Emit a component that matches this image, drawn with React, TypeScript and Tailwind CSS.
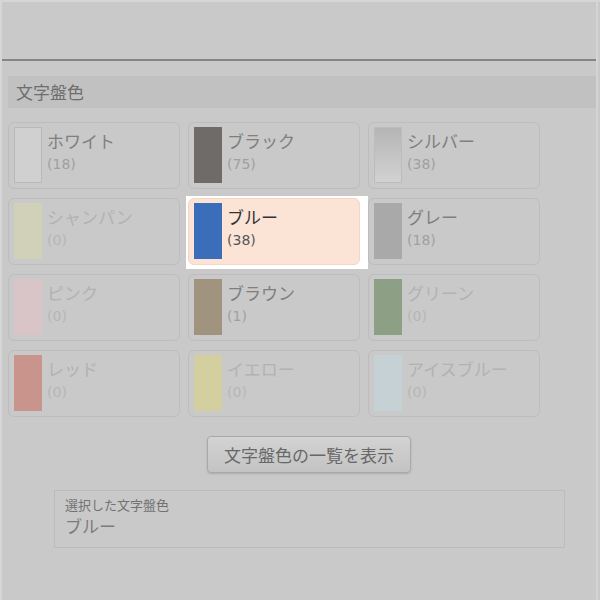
type Dial = {
  name: string
  count: number
  swatch: string
}

const dials: Dial[] = [
  { name: 'ホワイト', count: 18, swatch: 'bg-[#d0d0d0] border border-[#b9b9b9]' },
  { name: 'ブラック', count: 75, swatch: 'bg-[#6f6b69]' },
  { name: 'シルバー', count: 38, swatch: 'bg-gradient-to-b from-[#b5b5b5] to-[#d2d2d2] border border-[#bcbcbc]' },
  { name: 'シャンパン', count: 0, swatch: 'bg-[#d1d0b9]' },
  { name: 'ブルー', count: 38, swatch: 'bg-[#3a6dba]' },
  { name: 'グレー', count: 18, swatch: 'bg-[#a9a9a9]' },
  { name: 'ピンク', count: 0, swatch: 'bg-[#d9c5c7]' },
  { name: 'ブラウン', count: 1, swatch: 'bg-[#a0947f]' },
  { name: 'グリーン', count: 0, swatch: 'bg-[#8d9f84]' },
  { name: 'レッド', count: 0, swatch: 'bg-[#c9948b]' },
  { name: 'イエロー', count: 0, swatch: 'bg-[#d3cf9e]' },
  { name: 'アイスブルー', count: 0, swatch: 'bg-[#c6d1d5]' },
]

const selected = 'ブルー'

function DialCard({ dial }: { dial: Dial }) {
  const isSelected = dial.name === selected
  const muted = dial.count === 0

  const card = (
    <div
      className={`flex h-[67px] rounded-[6px] border pl-[5px] pt-[4px] ${
        isSelected ? 'bg-[#fbe3d5] border-[#f3d6c6]' : 'bg-[#c9c9c9] border-[#bdbdbd]'
      }`}
    >
      <div className={`w-[28px] h-[56px] shrink-0 ${dial.swatch}`} />
      <div className="pl-[5px] pt-[4px] flex flex-col">
        <span
          className={`text-[17px] leading-[20px] ${
            isSelected ? 'text-[#333333]' : muted ? 'text-[#b2b2b2]' : 'text-[#7f7f7f]'
          }`}
        >
          {dial.name}
        </span>
        <span
          className={`mt-[4px] font-['DejaVu_Sans'] text-[14px] leading-[18px] ${
            isSelected ? 'text-[#555555]' : muted ? 'text-[#b6b6b6]' : 'text-[#a0a0a0]'
          }`}
        >
          ({dial.count})
        </span>
      </div>
    </div>
  )

  if (isSelected) {
    return (
      <div className="-ml-[2px] -mt-[2px] -mr-[8px] -mb-[4px] pl-[2px] pt-[2px] pr-[8px] pb-[4px] bg-white">
        {card}
      </div>
    )
  }
  return card
}

export default function App() {
  return (
    <div
      className="w-[600px] h-[600px] bg-[#c9c9ca] border-t-2 border-l-2 border-[#d6d6d6] overflow-hidden"
      style={{ fontFamily: '"Noto Sans CJK JP", "Noto Sans", sans-serif' }}
    >
      <div className="w-[596px] h-full border-r-2 border-[#d4d4d4] flex flex-col">
        <div className="h-[57px]" />
        <div className="h-[2px] bg-[#858585]" />

        {/* 文字盤色 header */}
        <div className="mt-[15px] ml-[6px] h-[32px] bg-[#c1c1c1] flex items-center pl-[8px]">
          <span className="text-[17px] text-[#6e6e6e]">文字盤色</span>
        </div>

        <div className="mt-[14px] ml-[6px] grid grid-cols-[172px_172px_172px] gap-x-[8px] gap-y-[9px]">
          {dials.map((d) => (
            <DialCard key={d.name} dial={d} />
          ))}
        </div>

        <div className="flex justify-center pl-[20px] mt-[19px]">
          <button className="w-[204px] h-[37px] rounded-[4px] border border-[#a9a9a9] bg-gradient-to-b from-[#d3d3d3] to-[#c3c3c3] shadow-[0_1px_2px_rgba(0,0,0,0.15)] text-[17px] text-[#686868]">
            文字盤色の一覧を表示
          </button>
        </div>

        <div className="mt-[17px] ml-[52px] w-[511px] h-[58px] border border-[#bcbcbc] pl-[10px] pt-[5px]">
          <div className="text-[13px] leading-[18px] text-[#727272]">選択した文字盤色</div>
          <div className="text-[17px] leading-[24px] text-[#7c7c7c]">ブルー</div>
        </div>
      </div>
    </div>
  )
}
